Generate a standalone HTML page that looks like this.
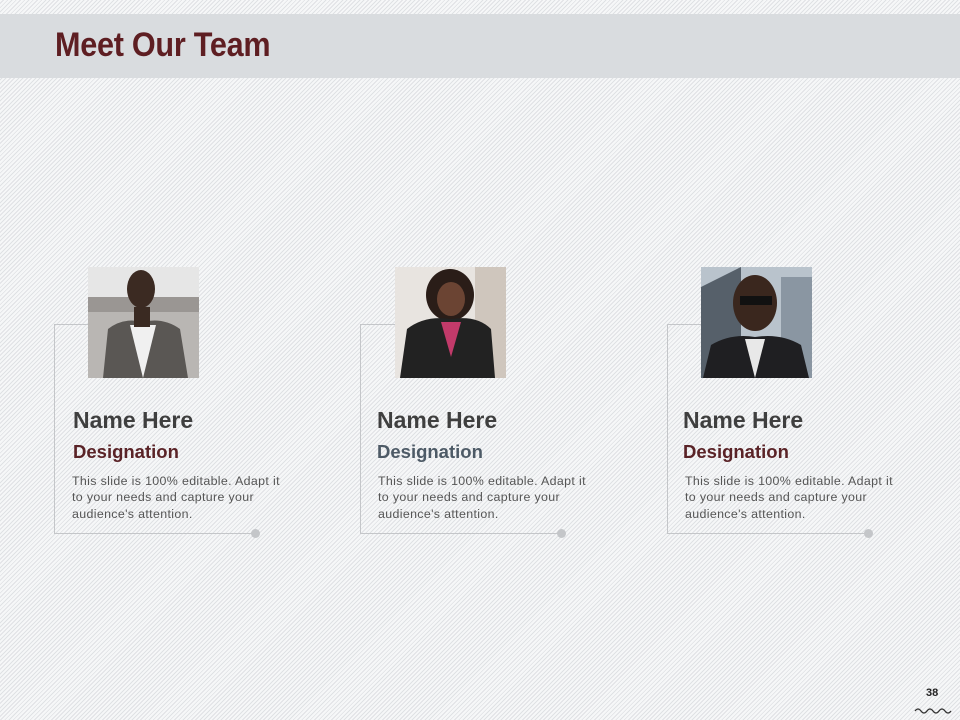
<!DOCTYPE html>
<html><head><meta charset="utf-8"><style>
*{margin:0;padding:0;box-sizing:border-box}
body{width:960px;height:720px;overflow:hidden;position:relative;font-family:"Liberation Sans",sans-serif;
background:#f1f2f3 repeating-linear-gradient(135deg,#f6f7f8 0 2px,#dfe1e4 2px 3px);}
.hdr{position:absolute;left:0;top:14px;width:960px;height:64px;background:#d9dcdf}
.hdr h1{position:absolute;left:55px;top:12px;font-size:34px;color:#5e1e22;font-weight:bold;transform:scaleX(.9);transform-origin:left;letter-spacing:-.3px}
.card{position:absolute;top:324px;width:202px;height:210px;border-left:1px solid #c4c6c9;border-bottom:1px solid #c4c6c9}
.card:before{content:"";position:absolute;left:0;top:0;width:36px;height:1px;background:#c4c6c9}
.card:after{content:"";position:absolute;right:-4px;bottom:-5px;width:9px;height:9px;border-radius:50%;background:#c4c6c9}
.ph{position:absolute;top:267px;width:111px;height:111px;overflow:hidden}
.nm{position:absolute;top:407px;font-size:23px;color:#3f3f3f;font-weight:bold}
.ds{position:absolute;top:441px;font-size:18.5px;color:#5a2327;font-weight:bold}
.tx{position:absolute;top:473px;font-size:12.4px;letter-spacing:.35px;line-height:16.3px;color:#555;width:230px}
.pg{position:absolute;left:926px;top:687px;font-size:11px;color:#222;font-weight:bold}
</style></head><body>
<div class="hdr"><h1>Meet Our Team</h1></div>

<div class="card" style="left:54px"></div>
<div class="card" style="left:360px"></div>
<div class="card" style="left:667px"></div>

<div class="ph" style="left:88px">
<svg width="111" height="111"><rect width="111" height="111" fill="#e6e6e6"/><rect y="30" width="111" height="25" fill="#9a9693"/><rect y="45" width="111" height="66" fill="#b9b6b3"/>
<path d="M15 111 L20 62 Q35 50 55 55 Q75 50 92 62 L100 111Z" fill="#5a5754"/><path d="M42 58 L55 111 L68 58Z" fill="#f0f0f0"/><rect x="46" y="40" width="16" height="20" fill="#3a2a22"/><ellipse cx="53" cy="22" rx="14" ry="19" fill="#3b2a22"/></svg></div>

<div class="ph" style="left:395px">
<svg width="111" height="111"><rect width="111" height="111" fill="#e8e4e0"/><rect x="80" width="31" height="111" fill="#cfc6bd"/>
<ellipse cx="55" cy="28" rx="24" ry="26" fill="#2a1d18"/><ellipse cx="56" cy="32" rx="14" ry="17" fill="#6b4433"/>
<path d="M5 111 L12 62 Q30 48 56 52 Q82 48 96 62 L100 111Z" fill="#222"/><path d="M46 55 L56 90 L66 55Z" fill="#c23a6a"/></svg></div>

<div class="ph" style="left:701px">
<svg width="111" height="111"><rect width="111" height="111" fill="#b9c3cc"/><path d="M0 20 L40 0 L40 111 L0 111Z" fill="#56606a"/><rect x="80" y="10" width="31" height="101" fill="#8a96a2"/>
<ellipse cx="54" cy="36" rx="22" ry="28" fill="#3a271e"/><rect x="39" y="29" width="32" height="9" fill="#111"/>
<path d="M2 111 L10 78 Q30 66 54 70 Q80 66 100 78 L108 111Z" fill="#1f1f22"/><path d="M44 72 L54 111 L64 72Z" fill="#e8e8e8"/></svg></div>

<div class="nm" style="left:73px">Name Here</div>
<div class="ds" style="left:73px">Designation</div>
<div class="tx" style="left:72px">This slide is 100% editable. Adapt it<br>to your needs and capture your<br>audience's attention.</div>

<div class="nm" style="left:377px">Name Here</div>
<div class="ds" style="left:377px;color:#4d5a66">Designation</div>
<div class="tx" style="left:378px">This slide is 100% editable. Adapt it<br>to your needs and capture your<br>audience's attention.</div>

<div class="nm" style="left:683px">Name Here</div>
<div class="ds" style="left:683px">Designation</div>
<div class="tx" style="left:685px">This slide is 100% editable. Adapt it<br>to your needs and capture your<br>audience's attention.</div>

<div class="pg">38</div>
<svg style="position:absolute;left:914px;top:706px" width="38" height="8"><path d="M1 5 Q4 1 7 5 T13 5 T19 5 T25 5 T31 5 T37 5" fill="none" stroke="#333" stroke-width="1.3"/></svg>
</body></html>
